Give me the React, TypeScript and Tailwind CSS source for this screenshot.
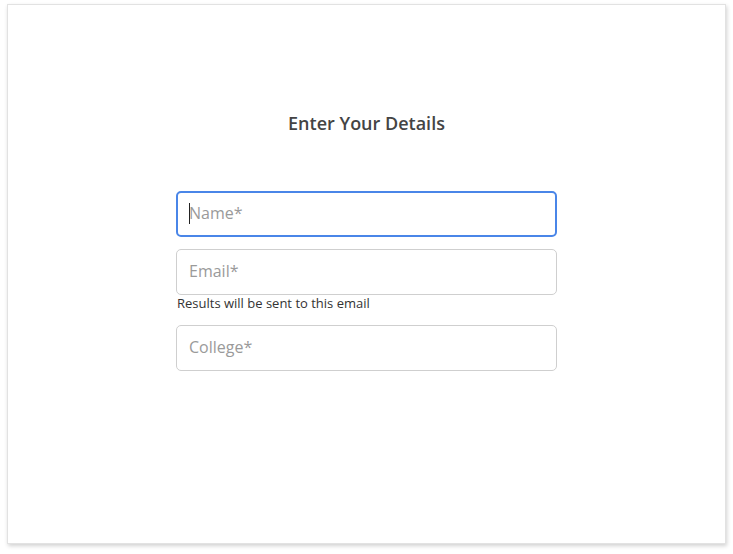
import React from "react";

const Field = ({ label, focused }: { label: string; focused?: boolean }) => (
  <div className="relative">
    <input
      type="text"
      placeholder={label}
      className={`w-full h-[46px] rounded-[5px] bg-white text-[16px] text-[#333] placeholder:text-[#9a9a9a] outline-none pb-[2px] ${
        focused
          ? "border-2 border-[#4a86e8] px-[11px]"
          : "border border-[#cfcfcf] px-[12px]"
      }`}
    />
    {focused && (
      <span className="absolute left-[13px] top-[12px] h-[21px] w-px bg-[#222]" />
    )}
  </div>
);

const App = () => {
  return (
    <div
      className="w-[733px] h-[554px] bg-white pt-[4px] pl-[7px]"
      style={{ fontFamily: '"Open Sans", sans-serif' }}
    >
      <div className="w-[719px] h-[540px] bg-white border border-[#e2e2e2] shadow-[1px_2px_4px_rgba(0,0,0,0.18)] flex flex-col items-center pt-[106px]">
        <div className="text-[18px] font-semibold text-[#444] leading-[24px]">
          Enter Your Details
        </div>
        <div className="w-[381px] mt-[56px] flex flex-col">
          <Field label="Name*" focused />
          <div className="mt-[12px]">
            <Field label="Email*" />
          </div>
          <div className="text-[13px] leading-[16px] text-[#333] pl-[1px]">
            Results will be sent to this email
          </div>
          <div className="mt-[14px]">
            <Field label="College*" />
          </div>
        </div>
      </div>
    </div>
  );
};

export default App;
